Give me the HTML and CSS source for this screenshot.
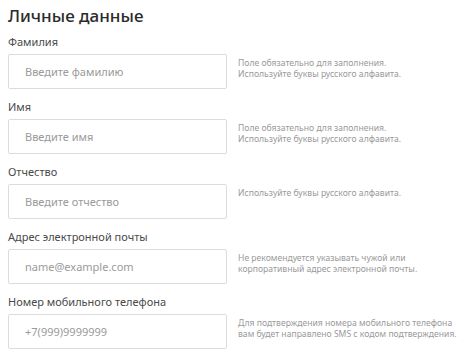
FILE: index.html
```html
<!DOCTYPE html>
<html lang="ru">
  <head>
    <meta charset="UTF-8" />
    <meta name="viewport" content="width=device-width, initial-scale=1.0" />
    <title>Личные данные</title>
    <link rel="stylesheet" href="styles.css">
  </head>
  <body>
    <h2 class="title">Личные данные</h2>

    <div class="field">
      <label class="label" for="lastname">Фамилия</label>
      <div class="row">
        <input id="lastname" class="input" type="text" placeholder="Введите фамилию" />
        <p class="hint">Поле обязательно для заполнения.<br />Используйте буквы русского алфавита.</p>
      </div>
    </div>

    <div class="field">
      <label class="label" for="firstname">Имя</label>
      <div class="row">
        <input id="firstname" class="input" type="text" placeholder="Введите имя" />
        <p class="hint">Поле обязательно для заполнения.<br />Используйте буквы русского алфавита.</p>
      </div>
    </div>

    <div class="field">
      <label class="label" for="middlename">Отчество</label>
      <div class="row">
        <input id="middlename" class="input" type="text" placeholder="Введите отчество" />
        <p class="hint">Используйте буквы русского алфавита.</p>
      </div>
    </div>

    <div class="field">
      <label class="label" for="email">Адрес электронной почты</label>
      <div class="row">
        <input id="email" class="input" type="email" placeholder="name@example.com" />
        <p class="hint">Не рекомендуется указывать чужой или<br />корпоративный адрес электронной почты.</p>
      </div>
    </div>

    <div class="field">
      <label class="label" for="phone">Номер мобильного телефона</label>
      <div class="row">
        <input id="phone" class="input" type="tel" placeholder="+7(999)9999999" />
        <p class="hint">Для подтверждения номера мобильного телефона<br />вам будет направлено SMS с кодом подтверждения.</p>
      </div>
    </div>
  </body>
</html>
```

FILE: styles.css
```css
body {
  margin: 0;
  padding: 5px 8px 0;
  font-family: "Noto Sans", "Open Sans", sans-serif;
  background: #fff;
  color: #333;
}

.title {
  margin: 0 0 8px;
  font-size: 17px;
  line-height: 22px;
  font-weight: 500;
  color: #2b2b2b;
}

.field {
  margin-bottom: 11px;
}

.label {
  display: block;
  font-size: 11px;
  line-height: 14px;
  color: #4a4a4a;
  margin-bottom: 5px;
}

.row {
  display: flex;
  align-items: flex-start;
  gap: 11px;
}

.input {
  flex: none;
  box-sizing: border-box;
  width: 219px;
  height: 35px;
  padding: 0 16px;
  border: 1px solid #dcdcdc;
  border-radius: 2px;
  font-family: inherit;
  font-size: 11px;
  color: #333;
  outline: none;
}

.input::placeholder {
  color: #9a9a9a;
}

.hint {
  margin: 4px 0 0;
  font-size: 8.6px;
  line-height: 11px;
  color: #9a9a9a;
  white-space: nowrap;
}
```
